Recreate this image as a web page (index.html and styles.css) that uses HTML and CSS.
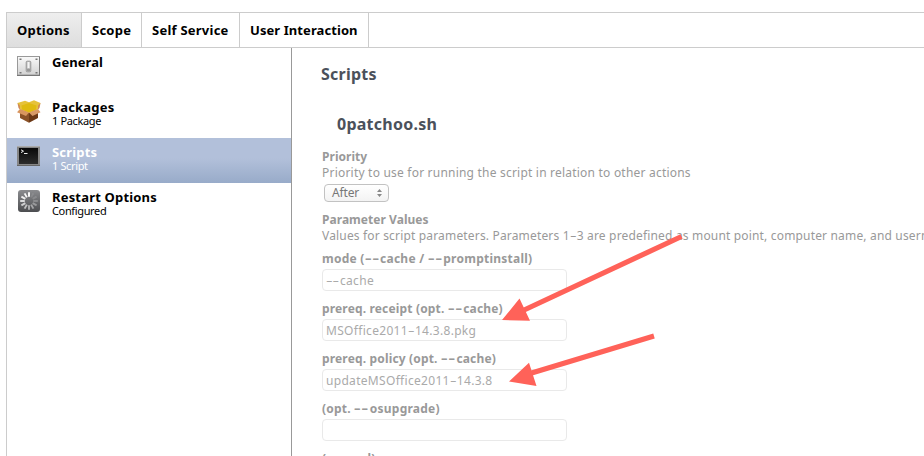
FILE: index.html
```
<!DOCTYPE html>
<html lang="en">
<head>
<meta charset="utf-8">
<title>Scripts</title>
<link rel="stylesheet" href="styles.css">
</head>
<body>
<div class="window">
  <nav class="tabs">
    <a class="tab tab-options active">Options</a>
    <a class="tab tab-scope">Scope</a>
    <a class="tab tab-service">Self Service</a>
    <a class="tab tab-user">User Interaction</a>
  </nav>
  <div class="panes">
    <aside class="sidebar">
      <div class="item">
        <svg class="icon" viewBox="0 0 24 24">
          <defs><linearGradient id="plate" x2="0" y2="1"><stop stop-color="#fafafa"/><stop offset="1" stop-color="#d2d2d2"/></linearGradient></defs>
          <rect x=".5" y="1.5" width="22" height="18.5" fill="url(#plate)" stroke="#999"/>
          <path d="M0 20.5h23M22.5 2v19" stroke="#777" fill="none"/>
          <g fill="#777"><rect x="2.5" y="3.5" width="2" height="1.5"/><rect x="18.5" y="3.5" width="2" height="1.5"/><rect x="2.5" y="17" width="2" height="1.5"/><rect x="18.5" y="17" width="2" height="1.5"/></g>
          <rect x="9.2" y="6.2" width="4.6" height="10.6" rx="1" fill="#bbb" stroke="#999"/>
          <rect x="10.5" y="7" width="2" height="6" fill="#f5f5f5"/><path d="M10 15h3" stroke="#777"/>
        </svg>
        <div class="item-text"><div class="name snug">General</div></div>
      </div>
      <div class="item">
        <svg class="icon" viewBox="0 0 24 24">
          <path d="M3 10l9 2v10.8L3 18z" fill="#8a5127"/><path d="M21 10l-9 2v10.8l9-4.8z" fill="#6b3816"/>
          <path d="M.5 3L8 .8l4 1.4L17 .3 23.5 3 21 9.5 12 13 3 9.5z" fill="#e6c23a"/>
          <path d="M4.5 5.5L12 3l7.5 2.5-.5 4-7 3-7-3z" fill="#dfba10"/>
          <path d="M.5 3L3 5.5v4L1.500 8z" fill="#cf8a57"/><path d="M23.500 3L21 5.500v4L22.500 8z" fill="#cf8a57"/>
          <path d="M3 9l9 3.500-3 3.500L0 12.300z" fill="#d8955f"/><path d="M21 9l-9 3.500 3.500 3.500 8-3.700z" fill="#d89a68"/>
        </svg>
        <div class="item-text"><div class="name">Packages</div><div class="sub">1 Package</div></div>
      </div>
      <div class="item selected">
        <svg class="icon" viewBox="0 0 24 24">
          <defs><linearGradient id="term" x2="0" y2="1"><stop stop-color="#080808"/><stop offset="1" stop-color="#2c2c2c"/></linearGradient></defs>
          <rect y="1" width="23" height="20" fill="#858585"/><path d="M0 1.5h23" stroke="#aaa"/><path d="M0 20.5h23" stroke="#666"/>
          <rect x="2" y="3" width="19" height="16" fill="url(#term)"/>
          <path d="M4 4.8l2.5 1.4L4 7.6M7 8.5h3.5" fill="none" stroke="#eee"/>
        </svg>
        <div class="item-text"><div class="name">Scripts</div><div class="sub">1 Script</div></div>
      </div>
      <div class="item">
        <svg class="icon" viewBox="0 0 24 24">
          <defs><linearGradient id="spin" x2="0" y2="1"><stop stop-color="#8b8c8f"/><stop offset="1" stop-color="#4c4d50"/></linearGradient></defs>
          <rect x="1" width="22" height="22" rx="3" fill="url(#spin)"/>
          <g stroke-width="1.9" stroke="#fff">
            <path d="M12 2.2v4.6"/>
            <path d="M12 2.2v4.6" transform="rotate(-30 12 11)" opacity=".95"/>
            <path d="M12 2.2v4.6" transform="rotate(-60 12 11)" opacity=".88"/>
            <path d="M12 2.2v4.6" transform="rotate(-90 12 11)" opacity=".8"/>
            <path d="M12 2.2v4.6" transform="rotate(-120 12 11)" opacity=".7"/>
            <path d="M12 2.2v4.6" transform="rotate(-150 12 11)" opacity=".62"/>
            <path d="M12 2.2v4.6" transform="rotate(180 12 11)" opacity=".54"/>
            <path d="M12 2.2v4.6" transform="rotate(150 12 11)" opacity=".45"/>
            <path d="M12 2.2v4.6" transform="rotate(120 12 11)" opacity=".35"/>
            <path d="M12 2.2v4.6" transform="rotate(90 12 11)" opacity=".22"/>
            <path d="M12 2.2v4.6" transform="rotate(60 12 11)" opacity=".15"/>
            <path d="M12 2.2v4.6" transform="rotate(30 12 11)" opacity=".1"/>
          </g>
        </svg>
        <div class="item-text"><div class="name">Restart Options</div><div class="sub">Configured</div></div>
      </div>
    </aside>
    <main class="content">
      <h1>Scripts</h1>
      <h2>0patchoo.sh</h2>
      <div class="label">Priority</div>
      <div class="help">Priority to use for running the script in relation to other actions</div>
      <div class="select"><span>After</span>
        <svg class="updown" viewBox="0 0 5 8"><path d="M0 3L2.5 0 5 3zM0 5h5L2.5 8z" fill="#888"/></svg>
      </div>
      <div class="label">Parameter Values</div>
      <div class="help tight">Values for script parameters. Parameters 1<i class="dash one">-</i>3 are predefined as mount point, computer name, and username</div>
      <div class="field"><div class="label wide">mode (<i class="dash">--</i>cache / <i class="dash">--</i>promptinstall)</div><div class="input"><i class="dash">--</i>cache</div></div>
      <div class="field"><div class="label mid">prereq. receipt (opt. <i class="dash">--</i>cache)</div><div class="input">MSOffice2011<i class="dash one">-</i>14.3.8.pkg</div></div>
      <div class="field"><div class="label mid">prereq. policy (opt. <i class="dash">--</i>cache)</div><div class="input">updateMSOffice2011<i class="dash one">-</i>14.3.8</div></div>
      <div class="field"><div class="label wide">(opt. <i class="dash">--</i>osupgrade)</div><div class="input"></div></div>
      <div class="field"><div class="label mid">(unused)</div><div class="input"></div></div>
    </main>
  </div>
</div>
<svg class="arrows" viewBox="0 0 924 456">
  <path d="M681.5 236.5L522 311M654 336L530 373.5" stroke="#ff6259" stroke-width="5.2" fill="none"/>
  <path d="M502 320L519.5 298.5 530 320.7zM509 381.5L529 362.7 536.5 386z" fill="#ff6259"/>
</svg>
</body>
</html>
```
FILE: styles.css
```
* { box-sizing: border-box; }
html, body { margin: 0; height: 456px; overflow: hidden; background: #fff; }
body { font: 12px/16px "Noto Sans", sans-serif; color: #000; position: relative; }

.window { padding: 12px 0 0 6px; height: 456px; display: flex; flex-direction: column; }
.tabs { display: flex; height: 36px; border-top: 1px solid #ccc; border-bottom: 1px solid #ccc; border-left: 1px solid #ccc; }
.tab { border-right: 1px solid #ccc; padding-left: 10px; font-size: 13px; font-weight: 700; line-height: 35px; letter-spacing: .24px; white-space: nowrap; }
.tab.active { background: linear-gradient(#eee, #dedede); }
.tab-options { width: 75px; }
.tab-scope { width: 60px; }
.tab-service { width: 98px; }
.tab-user { width: 129px; letter-spacing: .08px; }

.panes { display: flex; flex: 1; min-height: 0; }
.sidebar { width: 286px; flex: none; border-left: 1px solid #ccc; border-right: 1px solid #999; }
.item { display: flex; height: 45px; padding: 7px 0 0 10px; }
.item.selected { background: linear-gradient(#b2c0da 45%, #98abc9); color: #fff; }
.icon { width: 24px; height: 24px; flex: none; }
.item-text { padding-left: 11px; }
.name { font-size: 13px; font-weight: 700; line-height: 15px; letter-spacing: .18px; }
.name.snug { letter-spacing: .06px; }
.sub { font-size: 11px; line-height: 11px; letter-spacing: -.36px; }

.content { flex: 1; min-width: 0; padding: 15px 0 0 30px; white-space: nowrap; overflow: hidden; color: #999; }
h1, h2 { margin: 0; font-size: 16px; line-height: 22px; font-weight: 700; letter-spacing: .25px; color: #4b515b; }
h1 { margin-left: -1px; }
h2 { margin: 28px 0 14px 15px; }
.label { font-weight: 700; letter-spacing: .04px; }
.label.mid { letter-spacing: .16px; }
.label.wide { letter-spacing: .24px; }
.label .dash { width: 15.5px; letter-spacing: .6px; transform: scaleX(1.7); }
.help { letter-spacing: .21px; }
.help.tight { letter-spacing: .17px; }
.select { display: flex; align-items: center; justify-content: space-between; width: 65px; height: 18px; margin: 3px 0 10px 2px; padding: 0 6px 0 7px; border: 1px solid #c2c2c2; border-radius: 4px; background: linear-gradient(#fff, #f3f3f3); color: #777; letter-spacing: -.15px; }
.updown { width: 5px; height: 8px; }
.field { height: 50px; }
.help + .field { margin-top: 7px; }
.input { width: 245px; height: 22px; margin-top: 2px; padding-left: 3px; border: 1px solid #e9e9e9; border-radius: 4px; line-height: 21px; letter-spacing: .31px; color: #aaa; }
.dash { display: inline-block; width: 14px; font-style: normal; letter-spacing: 0; transform: scaleX(1.7); transform-origin: 0 50%; }
.dash.one { width: 7px; }

.arrows { position: absolute; inset: 0; width: 924px; height: 456px; }
```
